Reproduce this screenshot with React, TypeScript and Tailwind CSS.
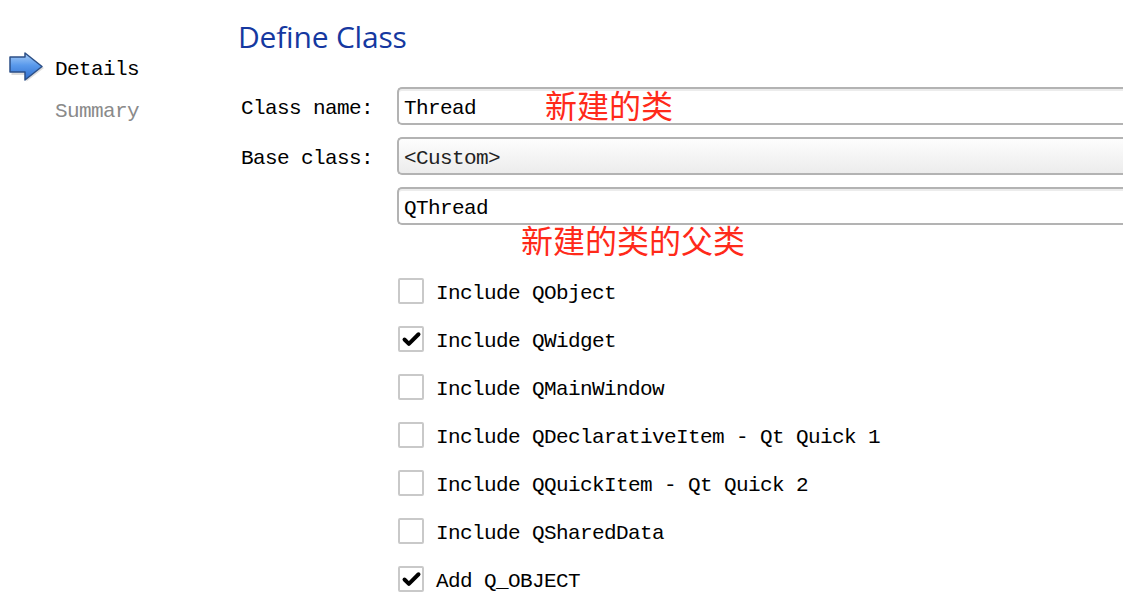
import { Check } from 'lucide-react'

const mono = "font-['Liberation_Mono','DejaVu_Sans_Mono',monospace] text-[21px] tracking-[-0.6px] leading-[26px] pt-[6px]"

const options = [
  { label: 'Include QObject', checked: false },
  { label: 'Include QWidget', checked: true },
  { label: 'Include QMainWindow', checked: false },
  { label: 'Include QDeclarativeItem - Qt Quick 1', checked: false },
  { label: 'Include QQuickItem - Qt Quick 2', checked: false },
  { label: 'Include QSharedData', checked: false },
  { label: 'Add Q_OBJECT', checked: true },
]

function StepArrow() {
  return (
    <svg width="36" height="32" viewBox="0 0 36 32" className="shrink-0">
      <defs>
        <linearGradient id="arrowFill" x1="0" y1="0" x2="0" y2="1">
          <stop offset="0" stopColor="#a9cef7" />
          <stop offset="0.45" stopColor="#5a9aec" />
          <stop offset="1" stopColor="#2e6ccc" />
        </linearGradient>
      </defs>
      <path d="M2.5 8 H17.5 V3.5 L35 17 L17.5 30.5 V24 H2.5 Z" fill="#c4c4c4" opacity="0.6" />
      <path d="M1 6 H16 V2 L33 15.5 L16 29 V21 H1 Z" fill="url(#arrowFill)" stroke="#2c4f86" strokeWidth="1.5" strokeLinejoin="round" />
    </svg>
  )
}

function Field({ value, combo }: { value: string; combo?: boolean }) {
  return (
    <div
      className={
        'h-[38px] w-[760px] rounded-l-[5px] border-2 border-r-0 border-[#b3b3b3] flex items-center pl-[5px] ' +
        (combo
          ? 'bg-gradient-to-b from-[#fdfdfd] to-[#ececec]'
          : 'bg-white shadow-[inset_0_2px_0_#ececec]')
      }
    >
      <span className={mono + (combo ? ' text-[#222]' : ' text-black')}>{value}</span>
    </div>
  )
}

export default function App() {
  return (
    <div className="relative w-[1123px] h-[612px] overflow-hidden bg-white flex">
      <aside className="w-[238px] shrink-0 pt-[51px]">
        <div className="flex items-center pl-[9px] h-[32px]">
          <StepArrow />
          <span className={mono + ' ml-[10px] text-black'}>Details</span>
        </div>
        <div className={mono + ' pl-[55px] mt-[10px] text-[#8a8a8a]'}>Summary</div>
      </aside>

      <main className="flex-1 pt-[18px]">
        <h1 className="font-['Open_Sans','Noto_Sans',sans-serif] text-[30px] leading-[38px] text-[#1538a0] tracking-[-0.2px]">
          Define Class
        </h1>

        <div className="mt-[31px] flex flex-col gap-[12px]">
          <div className="flex items-center">
            <span className={mono + ' w-[159px] pl-[3px] text-black'}>Class name:</span>
            <Field value="Thread" />
          </div>
          <div className="flex items-center">
            <span className={mono + ' w-[159px] pl-[3px] text-black'}>Base class:</span>
            <Field value="<Custom>" combo />
          </div>
          <div className="flex items-center pl-[159px]">
            <Field value="QThread" />
          </div>
        </div>

        <ul className="mt-[53px] pl-[160px] flex flex-col gap-[22px]">
          {options.map((o) => (
            <li key={o.label} className="flex items-center h-[26px]">
              <span className="w-[26px] h-[26px] shrink-0 rounded-[2px] border-2 border-[#c9c9c9] bg-white flex items-center justify-center">
                {o.checked && <Check size={21} strokeWidth={4.5} className="text-black" />}
              </span>
              <span className={mono + ' ml-[12px] text-black'}>{o.label}</span>
            </li>
          ))}
        </ul>
      </main>

      <span className="absolute left-[545px] top-[84px] font-['Noto_Sans_CJK_SC',sans-serif] text-[32px] leading-[40px] text-[#ff2a1a]">
        新建的类
      </span>
      <span className="absolute left-[521px] top-[219px] font-['Noto_Sans_CJK_SC',sans-serif] text-[32px] leading-[40px] text-[#ff2a1a]">
        新建的类的父类
      </span>
    </div>
  )
}
